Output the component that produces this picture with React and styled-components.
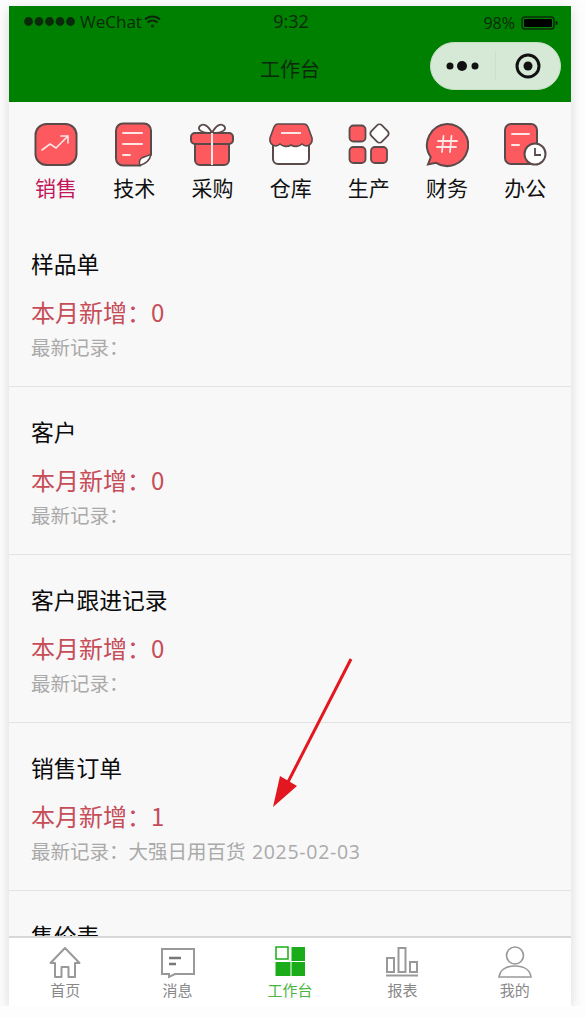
import React from 'react'
import styled, { createGlobalStyle } from 'styled-components'

const GlobalStyle = createGlobalStyle`
  html, body {
    margin: 0;
    padding: 0;
    background: #fdfdfd;
    font-family: "Noto Sans CJK SC", "Open Sans", sans-serif;
  }
`

const Phone = styled.div`
  position: relative;
  width: 562px;
  height: 1000px;
  margin: 6px 0 0 9px;
  display: flex;
  flex-direction: column;
  background: #f8f8f8;
  box-shadow: 0 3px 12px rgba(0, 0, 0, 0.15);
`

const Header = styled.header`
  position: relative;
  height: 96px;
  flex-shrink: 0;
  background: #008000;
  color: #0b2a0b;
`

const StatusBar = styled.div`
  height: 30px;
  padding: 0 13px 0 15px;
  display: grid;
  grid-template-columns: 1fr auto 1fr;
  align-items: center;
`

const StatusLeft = styled.div`
  display: flex;
  align-items: center;
  gap: 5px;
  font-family: "Open Sans", sans-serif;
  font-size: 17px;
`

const StatusRight = styled.div`
  display: flex;
  align-items: center;
  justify-content: flex-end;
  gap: 6px;
  font-family: "Open Sans", sans-serif;
  font-size: 16px;
  padding-top: 4px;
`

const Clock = styled.div`
  font-family: "Open Sans", sans-serif;
  font-size: 18px;
`

const NavTitle = styled.div`
  height: 66px;
  display: flex;
  align-items: center;
  justify-content: center;
  font-size: 20px;
  padding-bottom: 2px;
  box-sizing: border-box;
`

const Capsule = styled.div`
  position: absolute;
  top: 36px;
  right: 10px;
  width: 131px;
  height: 48px;
  border-radius: 24px;
  display: flex;
  align-items: center;
  background: #d6e9d6;
  border: 1px solid #c4dec4;
  box-sizing: border-box;
`

const CapsulePart = styled.div`
  flex: 1;
  height: 30px;
  display: flex;
  align-items: center;
  justify-content: center;
  & + & {
    border-left: 1px solid #c9e0c9;
  }
`

const Categories = styled.nav`
  flex-shrink: 0;
  height: 117px;
  padding: 20px 8px 0;
  box-sizing: border-box;
  display: grid;
  grid-template-columns: repeat(7, 78.2px);
`

const Category = styled.div`
  display: flex;
  flex-direction: column;
  align-items: center;
  font-size: 21px;
  line-height: 30px;
  color: ${p => (p.$active ? '#c2185b' : '#111')};
`

const CategoryIcon = styled.div`
  height: 46px;
  margin-bottom: 4px;
`

const List = styled.main`
  flex: 1;
  min-height: 0;
  overflow: hidden;
`

const Card = styled.section`
  height: 168px;
  box-sizing: border-box;
  padding: 26px 22px 0;
  border-bottom: 1px solid #e3e3e3;
`

const CardTitle = styled.div`
  font-size: 22.75px;
  line-height: 38px;
  color: #0a0a0a;
`

const CardStat = styled.div`
  margin-top: 9px;
  font-size: 24px;
  line-height: 39px;
  color: #c64c58;
`

const CardRecent = styled.div`
  font-size: 19.5px;
  line-height: 32px;
  color: #aaa;
`

const RecentDate = styled.span`
  margin-left: 2px;
  font-family: "Open Sans", sans-serif;
  letter-spacing: 0.7px;
`

const TabBar = styled.footer`
  flex-shrink: 0;
  height: 70px;
  box-sizing: border-box;
  display: grid;
  grid-template-columns: repeat(5, 1fr);
  background: #fff;
  border-top: 2px solid #d8d8d8;
`

const Tab = styled.div`
  display: flex;
  flex-direction: column;
  align-items: center;
  padding-top: 8px;
  font-size: 15px;
  line-height: 20px;
  color: ${p => (p.$active ? '#4cb53f' : '#888')};
`

const TabIcon = styled.div`
  height: 33px;
  margin-bottom: 1px;
`

const Arrow = styled.svg`
  position: absolute;
  left: 255px;
  top: 648px;
  pointer-events: none;
`

const red = '#fc5a5f'
const ink = '#5b4a4a'
const light = '#fde6e6'

const Glyph = ({ children, w = 44, h = 46 }) => (
  <svg width={w} height={h} viewBox={`0 0 ${w} ${h}`} fill="none">
    {children}
  </svg>
)

const SalesIcon = () => (
  <Glyph>
    <rect x="1.5" y="2" width="41" height="41" rx="11" fill={red} stroke={ink} strokeWidth="2" />
    <path d="M8 28l8-6 6 4 12-12M27 14h7v7" stroke={light} strokeWidth="1.6" strokeLinecap="round" />
  </Glyph>
)

const TechIcon = () => (
  <Glyph w={40}>
    <path d="M9 1.5h21a7 7 0 0 1 7 7v24l-11 11H9a7 7 0 0 1-7-7V8.5a7 7 0 0 1 7-7z" fill={red} stroke={ink} strokeWidth="2" />
    <path d="M26 43.500c-1-3 0-6 1-7s4-2 10-4c-1 5-5 9-11 11z" fill="#fff" stroke={ink} strokeWidth="1.500" />
    <path d="M9 11h19M9 22h19M9 33h7" stroke={light} strokeWidth="2" strokeLinecap="round" />
  </Glyph>
)

const PurchaseIcon = () => (
  <Glyph>
    <path d="M22 11c-4-8-9-10-12-7s0 7 12 7c12 0 15-4 12-7s-8-1-12 7z" fill="#fff" stroke={ink} strokeWidth="1.8" />
    <path d="M5 20h34v18a5 5 0 0 1-5 5H10a5 5 0 0 1-5-5z" fill={red} stroke={ink} strokeWidth="2" />
    <rect x="1" y="11" width="42" height="11" rx="4" fill={red} stroke={ink} strokeWidth="2" />
    <path d="M22 11v32" stroke={light} strokeWidth="2" />
  </Glyph>
)

const StoreIcon = () => (
  <Glyph>
    <path d="M4 22v15a5 5 0 0 0 5 5h26a5 5 0 0 0 5-5V22" fill="#fff" stroke={ink} strokeWidth="2" />
    <path d="M9 2h26c2 0 3 1 4 3l4 11c1 7-6 10-10 6-3 3-8 3-11 1-3 2-8 2-11-1-4 4-11 1-10-6L5 5c1-2 2-3 4-3z" fill={red} stroke={ink} strokeWidth="1.6" />
    <path d="M12 11h20" stroke={light} strokeWidth="2" />
  </Glyph>
)

const ProductionIcon = () => (
  <Glyph w={42}>
    <rect x="1.500" y="3.500" width="16" height="16" rx="4" fill={red} stroke={ink} strokeWidth="1.8" />
    <rect x="1.500" y="25" width="16" height="16" rx="4" fill={red} stroke={ink} strokeWidth="1.8" />
    <rect x="23" y="25" width="16" height="16" rx="4" fill={red} stroke={ink} strokeWidth="1.8" />
    <rect x="24" y="4" width="15" height="15" rx="3.5" fill="#fff" stroke={ink} strokeWidth="1.8" transform="rotate(45 31.500 11.500)" />
  </Glyph>
)

const FinanceIcon = () => (
  <Glyph>
    <path d="M22 2a21 21 0 1 1-11 38.800L3 42.500l2.800-7.500A21 21 0 0 1 22 2z" fill={red} stroke={ink} strokeWidth="2" />
    <path d="M18.500 14l-1.500 16M26.500 14l-1.500 16M13 19h19M12 25h19" stroke={light} strokeWidth="1.800" strokeLinecap="round" />
  </Glyph>
)

const OfficeIcon = () => (
  <Glyph>
    <path d="M8 2h20a6 6 0 0 1 6 6v29a5 5 0 0 1-5 5H8a6 6 0 0 1-6-6V8a6 6 0 0 1 6-6z" fill={red} stroke={ink} strokeWidth="2" />
    <path d="M9 12h17M9 23h7" stroke={light} strokeWidth="2" strokeLinecap="round" />
    <circle cx="32" cy="32" r="10.5" fill="#fff" stroke={ink} strokeWidth="2" />
    <path d="M32 26v7h6" stroke={ink} strokeWidth="1.8" />
  </Glyph>
)

const HomeIcon = () => (
  <svg width="32" height="33" viewBox="0 0 32 33" fill="none" stroke="#999" strokeWidth="2">
    <path d="M1.5 17L16 2l14.5 15h-4.5v14h-6.500v-10h-7v10h-6.500V17z" strokeLinejoin="round" />
  </svg>
)

const MessageIcon = () => (
  <svg width="34" height="33" viewBox="0 0 34 33" fill="none" stroke="#999" strokeWidth="2">
    <path d="M1 3h32v25H14l-6 3v-3H1z" />
    <path d="M8 12h12M8 18h7" strokeWidth="2.4" stroke="#777" />
  </svg>
)

const BoardIcon = () => (
  <svg width="30" height="31" viewBox="0 0 30 31" fill="#1aad19">
    <rect x="1" y="1" width="12" height="12" fill="none" stroke="#1aad19" strokeWidth="1.500" />
    <rect x="16.500" y="1" width="13.500" height="14" />
    <rect x="0.500" y="16" width="15" height="14" />
    <rect x="16.500" y="16" width="13.500" height="14" />
  </svg>
)

const ChartIcon = () => (
  <svg width="34" height="33" viewBox="0 0 34 33" fill="none" stroke="#999" strokeWidth="2">
    <rect x="2" y="12" width="7" height="14" />
    <rect x="13.500" y="2" width="7" height="24" />
    <rect x="25" y="16" width="7" height="10" />
    <path d="M1 29.500h32" strokeWidth="2" />
  </svg>
)

const UserIcon = () => (
  <svg width="36" height="33" viewBox="0 0 36 33" fill="none" stroke="#999" strokeWidth="1.700">
    <circle cx="18" cy="9.500" r="8.500" />
    <path d="M2 31c1-7 7-11 16-11s15 4 16 11z" />
  </svg>
)

const categories = [
  ['销售', SalesIcon],
  ['技术', TechIcon],
  ['采购', PurchaseIcon],
  ['仓库', StoreIcon],
  ['生产', ProductionIcon],
  ['财务', FinanceIcon],
  ['办公', OfficeIcon],
]

const cards = [
  { title: '样品单', count: 0 },
  { title: '客户', count: 0 },
  { title: '客户跟进记录', count: 0 },
  { title: '销售订单', count: 1, customer: '大强日用百货', date: '2025-02-03' },
  { title: '售价表', count: 0 },
]

const tabs = [
  ['首页', HomeIcon],
  ['消息', MessageIcon],
  ['工作台', BoardIcon],
  ['报表', ChartIcon],
  ['我的', UserIcon],
]

export default function App() {
  return (
    <>
      <GlobalStyle />
      <Phone>
        <Header>
          <StatusBar>
            <StatusLeft>
              <svg width="51" height="9" viewBox="0 0 51 9" fill="#0b2a0b">
                {[4.5, 15, 25.500, 36, 46.500].map(cx => <circle key={cx} cx={cx} cy="4.500" r="4.400" />)}
              </svg>
              <span>WeChat</span>
              <svg width="17" height="13" viewBox="0 0 17 13" fill="none" stroke="#0b2a0b" strokeWidth="2" style={{ marginLeft: -3 }}>
                <path d="M1 4.500a11 11 0 0 1 15 0M3.500 7.500a7.500 7.500 0 0 1 10 0" />
                <circle cx="8.500" cy="11" r="1.500" fill="#0b2a0b" stroke="none" />
              </svg>
            </StatusLeft>
            <Clock>9:32</Clock>
            <StatusRight>
              <span>98%</span>
              <svg width="37" height="14" viewBox="0 0 37 14">
                <rect x="1" y="1" width="32" height="12" rx="3" fill="none" stroke="#0b2a0b" strokeWidth="1.500" />
                <rect x="3" y="3" width="28" height="8" rx="1" fill="#000" />
                <rect x="34.500" y="5" width="2" height="4" rx="1" fill="#0b2a0b" />
              </svg>
            </StatusRight>
          </StatusBar>
          <NavTitle>工作台</NavTitle>
          <Capsule>
            <CapsulePart>
              <svg width="34" height="12" viewBox="0 0 34 12" fill="#111">
                <circle cx="4" cy="6" r="3.500" />
                <circle cx="16" cy="6" r="5" />
                <circle cx="29" cy="6" r="3.500" />
              </svg>
            </CapsulePart>
            <CapsulePart>
              <svg width="26" height="26" viewBox="0 0 26 26">
                <circle cx="13" cy="13" r="11" fill="none" stroke="#111" strokeWidth="3" />
                <circle cx="13" cy="13" r="4.500" fill="#111" />
              </svg>
            </CapsulePart>
          </Capsule>
        </Header>
        <Categories>
          {categories.map(([label, Icon], i) => (
            <Category key={label} $active={i === 0}>
              <CategoryIcon><Icon /></CategoryIcon>
              {label}
            </Category>
          ))}
        </Categories>
        <List>
          {cards.map(card => (
            <Card key={card.title}>
              <CardTitle>{card.title}</CardTitle>
              <CardStat>本月新增：{card.count}</CardStat>
              <CardRecent>
                最新记录：{card.customer} {card.date && <RecentDate>{card.date}</RecentDate>}
              </CardRecent>
            </Card>
          ))}
        </List>
        <TabBar>
          {tabs.map(([label, Icon], i) => (
            <Tab key={label} $active={i === 2}>
              <TabIcon><Icon /></TabIcon>
              {label}
            </Tab>
          ))}
        </TabBar>
        <Arrow width="100" height="160" viewBox="0 0 100 160" fill="none">
          <path d="M87 5L23 130" stroke="#e3171f" strokeWidth="3" />
          <path d="M9 153l7-31 17 10z" fill="#e3171f" />
        </Arrow>
      </Phone>
    </>
  )
}
